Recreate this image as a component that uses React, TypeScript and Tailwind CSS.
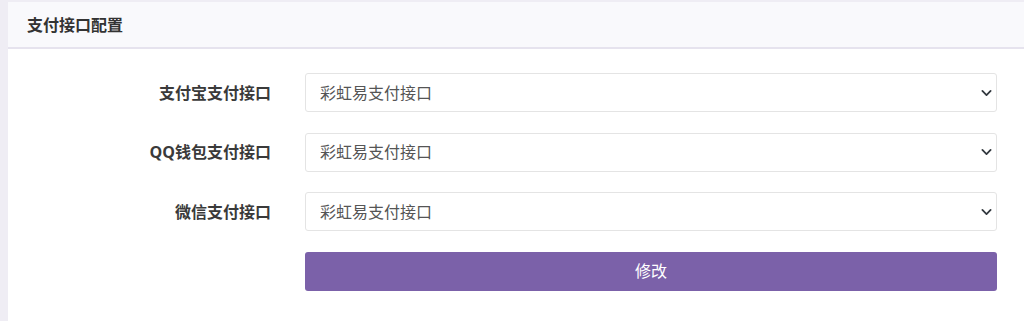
import React from 'react';

const rows = [
    { label: '支付宝支付接口', value: '彩虹易支付接口' },
    { label: 'QQ钱包支付接口', value: '彩虹易支付接口' },
    { label: '微信支付接口', value: '彩虹易支付接口' },
];

const font = { fontFamily: '"Open Sans", "Noto Sans CJK SC", sans-serif' };

export default function App() {
    return (
        <div className="flex h-[321px] w-[1024px] overflow-hidden bg-[#efedf4] pl-2 pt-[2px]" style={font}>
            <div className="flex-1 bg-white">
                {/* Panel header */}
                <div className="flex h-[47px] items-center border-b-2 border-[#e6e3ee] bg-[#f9f9fc] px-[19px]">
                    <h2 className="text-[16px] font-bold text-[#333]">支付接口配置</h2>
                </div>

                {/* Form */}
                <div className="flex flex-col gap-[20.5px] pt-[24px]">
                    {rows.map((row, i) => (
                        <div key={i} className="flex items-center">
                            <label className="w-[263px] text-right text-[16px] font-bold text-[#3a3a3a]">{row.label}</label>
                            <div className="relative ml-[34px] w-[692px]">
                                <select
                                    defaultValue={row.value}
                                    className="h-[39px] w-full appearance-none rounded-[3px] border border-[#e4e4e4] bg-white pl-[14px] text-[16px] text-[#555] outline-none"
                                    style={font}
                                >
                                    <option>{row.value}</option>
                                </select>
                                <svg
                                    className="pointer-events-none absolute right-[5px] top-1/2 -translate-y-1/2"
                                    width="11"
                                    height="11"
                                    viewBox="0 0 16 16"
                                    fill="none"
                                    stroke="#343a40"
                                    strokeWidth="2.6"
                                    strokeLinecap="round"
                                    strokeLinejoin="round"
                                >
                                    <path d="M2 5l6 6 6-6" />
                                </svg>
                            </div>
                        </div>
                    ))}

                    <div className="flex">
                        <button className="ml-[297px] h-[39px] w-[692px] rounded-[3px] bg-[#7b61a9] text-[16px] text-white">
                            修改
                        </button>
                    </div>
                </div>
            </div>
        </div>
    );
}
